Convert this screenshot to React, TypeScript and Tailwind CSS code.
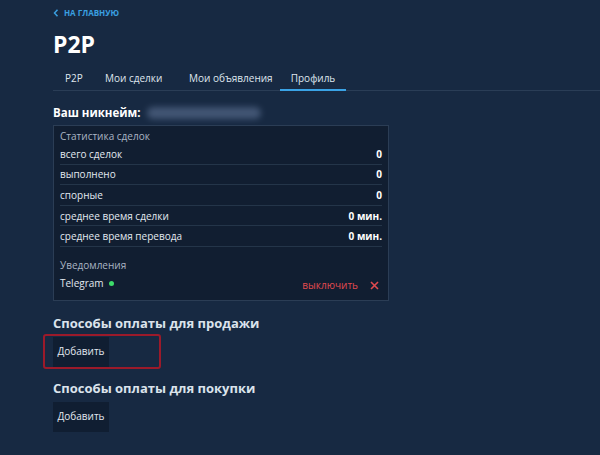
import React from "react";

const rows: [string, string][] = [
  ["всего сделок", "0"],
  ["выполнено", "0"],
  ["спорные", "0"],
  ["среднее время сделки", "0 мин."],
  ["среднее время перевода", "0 мин."],
];

export default function App() {
  return (
    <div
      className="w-full h-[455px] bg-[#172942] pl-[53px] overflow-hidden text-[#e6ecf3]"
      style={{ fontFamily: '"Open Sans", "Noto Sans", sans-serif' }}
    >
      <div className="flex items-center gap-[5px] pt-[6px] h-[19px] text-[#3a9fe0] text-[8px] font-bold">
        <svg width="6" height="8" viewBox="0 0 6 8" fill="none">
          <path d="M4.5 0.8 L1.5 4 L4.5 7.2" stroke="#3a9fe0" strokeWidth="1.5" />
        </svg>
        <span>НА ГЛАВНУЮ</span>
      </div>
      <div className="mt-[10px] h-[30px] flex items-center text-[23px] font-bold text-white leading-none">P2P</div>
      <div className="mt-[11px] flex border-b border-[#2a3d56] text-[10px] leading-[16px] text-[#dfe6ee]">
        <div className="w-[41px] pl-[12px] h-[20px]">P2P</div>
        <div className="w-[95px] pl-[11px] h-[20px]">Мои сделки</div>
        <div className="w-[91px] h-[20px]">Мои объявления</div>
        <div className="w-[66px] -mb-px h-[21px] border-b-2 border-[#3aa3e6] flex justify-center">Профиль</div>
      </div>
      <div className="mt-[12px] flex items-center h-[20px]">
        <span className="text-[11.5px] font-bold text-white">Ваш никнейм:</span>
        <div className="ml-[6px] w-[114px] h-[12px] rounded-[6px] bg-[#55698a] blur-[3px] opacity-70" />
      </div>
      <div className="mt-[2px] w-[336px] bg-[#111e31] border border-[#2b3d55] px-[6px] pt-[2px] pb-[7px]">
        <div className="text-[10px] text-[#aab5c3] h-[16px] flex items-center">Статистика сделок</div>
        {rows.map(([k, v]) => (
          <div
            key={k}
            className="h-[20.6px] flex items-center justify-between border-b border-[#243549] text-[10px] pt-[1px]"
          >
            <span className="text-[#e3e9f0]">{k}</span>
            <span className="font-bold text-white">{v}</span>
          </div>
        ))}
        <div className="mt-[12px] text-[10px] text-[#aab5c3] h-[14px] flex items-center">Уведомления</div>
        <div className="mt-[1px] flex items-center justify-between text-[10px]">
          <div className="flex items-center gap-[5px]">
            <span className="text-[#e3e9f0]">Telegram</span>
            <span className="w-[5px] h-[5px] rounded-full bg-[#3ddc6a]" />
          </div>
          <div className="flex items-center gap-[12px] pt-[4px]">
            <span className="text-[#e04a4f]">выключить</span>
            <svg width="9" height="9" viewBox="0 0 9 9" className="mr-[3px]">
              <path d="M1 1 L8 8 M8 1 L1 8" stroke="#e04a4f" strokeWidth="1.6" />
            </svg>
          </div>
        </div>
      </div>
      <div className="mt-[14px] text-[13px] font-bold text-[#dbe3ec] h-[18px] flex items-center">Способы оплаты для продажи</div>
      <div className="relative mt-[4px]">
        <div className="absolute -left-[10px] -top-[3px] w-[118px] h-[35px] border-2 border-[#9b1a2a] rounded-[3px]" />
        <button className="w-[56px] h-[30px] bg-[#101e32] text-[10px] text-[#e3e9f0]">Добавить</button>
      </div>
      <div className="mt-[13px] text-[13px] font-bold text-[#dbe3ec] h-[18px] flex items-center">Способы оплаты для покупки</div>
      <div className="mt-[4px]">
        <button className="w-[56px] h-[30px] bg-[#101e32] text-[10px] text-[#e3e9f0]">Добавить</button>
      </div>
    </div>
  );
}
